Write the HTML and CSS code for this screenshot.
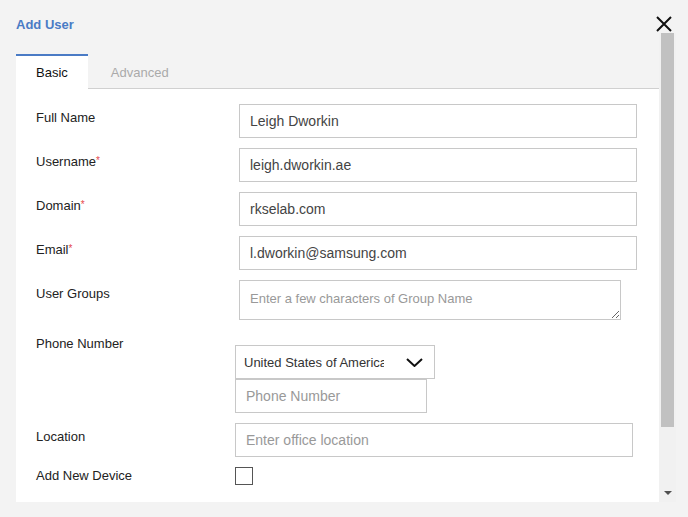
FILE: index.html
```html
<!DOCTYPE html>
<html lang="en">
<head>
<meta charset="utf-8">
<title>Add User</title>
<link rel="stylesheet" href="styles.css">
</head>
<body>
<div class="dialog">
  <div class="header">
    <h1 class="title">Add User</h1>
    <button class="close" aria-label="Close">
      <svg width="16" height="16" viewBox="0 0 16 16"><path d="M1 1 L15 15 M15 1 L1 15" stroke="#111" stroke-width="2" fill="none"/></svg>
    </button>
  </div>
  <div class="main">
    <div class="content">
      <div class="tabs">
        <div class="tab active">Basic</div>
        <div class="tab">Advanced</div>
        <div class="tab-fill"></div>
      </div>
      <div class="panel">
        <div class="row">
          <label class="label">Full Name</label>
          <input class="field shift" type="text" value="Leigh Dworkin">
        </div>
        <div class="row">
          <label class="label">Username<span class="req">*</span></label>
          <input class="field shift" type="text" value="leigh.dworkin.ae">
        </div>
        <div class="row">
          <label class="label">Domain<span class="req">*</span></label>
          <input class="field shift" type="text" value="rkselab.com">
        </div>
        <div class="row">
          <label class="label">Email<span class="req">*</span></label>
          <input class="field shift" type="text" value="l.dworkin@samsung.com">
        </div>
        <div class="row">
          <label class="label">User Groups</label>
          <textarea class="area shift" placeholder="Enter a few characters of Group Name"></textarea>
        </div>
        <div class="row">
          <label class="label">Phone Number</label>
          <div class="phone">
            <div class="select">
              <span class="select-text">United States of America</span>
              <svg class="chev" width="17" height="9" viewBox="0 0 17 9"><path d="M1 1 L8.5 8 L16 1" stroke="#111" stroke-width="2" fill="none"/></svg>
            </div>
            <input class="field phone-input" type="text" placeholder="Phone Number">
          </div>
        </div>
        <div class="row">
          <label class="label">Location</label>
          <input class="field" type="text" placeholder="Enter office location">
        </div>
        <div class="row row-check">
          <label class="label label-check">Add New Device</label>
          <span class="checkbox"></span>
        </div>
      </div>
    </div>
    <div class="scrollbar">
      <div class="thumb"></div>
      <div class="arrow"></div>
    </div>
  </div>
</div>
</body>
</html>
```
FILE: styles.css
```css
* { box-sizing: border-box; }
html, body {
  margin: 0;
  padding: 0;
  background: #f3f3f3;
  font-family: "Liberation Sans", Arial, sans-serif;
}
.dialog {
  width: 688px;
  height: 517px;
  overflow: hidden;
}
.header {
  height: 33px;
  display: flex;
  justify-content: space-between;
  align-items: flex-start;
  padding: 0 16px 0 16px;
}
.title {
  margin: 17px 0 0 0;
  font-size: 13px;
  line-height: 16px;
  font-weight: bold;
  color: #4a7bc5;
}
.close {
  margin-top: 16px;
  padding: 0;
  border: 0;
  background: none;
  width: 16px;
  height: 16px;
  display: block;
}
.close svg { display: block; }
.main {
  display: flex;
  height: 469px;
  padding-left: 16px;
}
.content {
  width: 643px;
  display: flex;
  flex-direction: column;
}
.tabs {
  display: flex;
  padding-top: 21px;
  height: 56px;
}
.tab {
  height: 35px;
  padding: 0 23px;
  font-size: 13px;
  line-height: 33px;
  color: #aaa;
  border-top: 2px solid transparent;
  border-bottom: 1px solid #d0d0d0;
}
.tab.active {
  background: #fff;
  color: #111;
  border-top-color: #4a7bc5;
  border-bottom-color: #fff;
  padding: 0 20px 0 20px;
}
.tab-fill {
  flex: 1;
  border-bottom: 1px solid #d0d0d0;
}
.panel {
  flex: 1;
  background: #fff;
  padding: 15px 0 0 20px;
}
.row {
  display: flex;
  align-items: flex-start;
  margin-bottom: 10px;
}
.label {
  width: 199px;
  flex: none;
  margin-top: 6px;
  font-size: 13px;
  line-height: 16px;
  color: #222;
}
.req {
  color: #e5484d;
  font-size: 10px;
  position: relative;
  top: -2px;
}
.field {
  display: block;
  width: 398px;
  height: 34px;
  margin: 0;
  padding: 0 10px;
  border: 1px solid #c8c8c8;
  border-radius: 0;
  font-family: inherit;
  font-size: 14px;
  color: #444;
  background: #fff;
  outline: none;
}
.field::placeholder { color: #999; }
.shift { margin-left: 4px; }
.area {
  display: block;
  width: 382px;
  height: 40px;
  padding: 10px 10px;
  border: 1px solid #c8c8c8;
  font-family: inherit;
  font-size: 13px;
  line-height: 16px;
  color: #444;
  background: #fff;
  outline: none;
  resize: both;
}
.area::placeholder { color: #999; }
.phone {
  margin-top: 15px;
  display: flex;
  flex-direction: column;
}
.select {
  width: 200px;
  height: 34px;
  border: 1px solid #c8c8c8;
  display: flex;
  align-items: center;
  padding-left: 8px;
  background: #fff;
}
.select-text {
  width: 140px;
  overflow: hidden;
  white-space: nowrap;
  font-size: 13px;
  color: #333;
}
.chev {
  margin-left: 22px;
  display: block;
}
.phone-input {
  width: 192px;
  margin-top: 0;
}
.row-check { margin-bottom: 0; }
.label-check { margin-top: 1px; }
.checkbox {
  display: block;
  width: 18px;
  height: 18px;
  border: 1px solid #555;
  background: #fff;
}
.scrollbar {
  width: 17px;
  height: 469px;
  background: #f1f1f1;
  position: relative;
}
.thumb {
  margin-left: 2px;
  width: 13px;
  height: 394px;
  background: #c1c1c1;
}
.arrow {
  position: absolute;
  left: 5px;
  top: 458px;
  width: 0;
  height: 0;
  border-left: 4px solid transparent;
  border-right: 4px solid transparent;
  border-top: 4px solid #505050;
}
```
